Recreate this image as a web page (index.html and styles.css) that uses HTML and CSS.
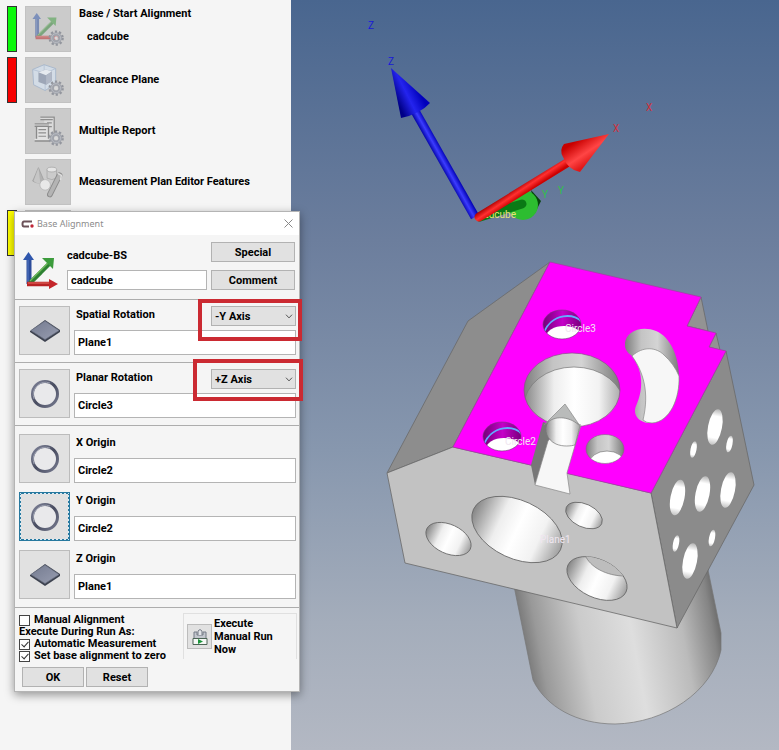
FILE: index.html
```html
<!DOCTYPE html>
<html lang="en">

<head>
    <meta charset="UTF-8">
    <meta name="viewport" content="width=device-width, initial-scale=1">
    <title>Base Alignment</title>
    <link rel="stylesheet" href="styles.css">
</head>

<body>
    <!-- shared icons -->
    <svg class="defs" aria-hidden="true">
        <defs>
            <linearGradient id="tile" x1="0" y1="0" x2="1" y2="1">
                <stop offset="0" stop-color="#747b90" />
                <stop offset="1" stop-color="#989db0" />
            </linearGradient>
            <linearGradient id="ringFill" x1="0" y1="0" x2="1" y2="1">
                <stop offset="0" stop-color="#80849a" />
                <stop offset=".5" stop-color="#484c60" />
                <stop offset="1" stop-color="#777b90" />
            </linearGradient>
        </defs>
        <symbol id="gear" viewBox="0 0 18 18">
            <circle cx="9" cy="9" r="7" fill="none" stroke="#92959d" stroke-width="3" stroke-dasharray="2.4 2" />
            <circle cx="9" cy="9" r="4.500" fill="none" stroke="#a0a3ab" stroke-width="4" />
            <circle cx="9" cy="9" r="5" fill="none" stroke="#b9bcc3" stroke-width="1" />
            <circle cx="9" cy="9" r="2" fill="#d8d8d8" />
        </symbol>
        <symbol id="axes" viewBox="0 0 36 38">
            <path d="M7 32V8" stroke="#2c4c9a" stroke-width="5" />
            <path d="M6 30V8" stroke="#5578c4" stroke-width="1" />
            <path d="M1 8L6.500 0L12 8Z" fill="#2f56ac" />
            <path d="M8 31L27 12" stroke="#2d8132" stroke-width="4.500" />
            <path d="M8 29L26 11" stroke="#70bb5c" stroke-width="1.200" />
            <path d="M20 6L32 6L31 17Z" fill="#3c9c3c" />
            <path d="M5 32H28" stroke="#b82224" stroke-width="4.500" />
            <path d="M6 31H28" stroke="#e66a60" stroke-width="1" />
            <path d="M27 27L36 32L27 37Z" fill="#c4262a" />
        </symbol>
        <symbol id="plane" viewBox="0 0 30 22">
            <path d="M0 11L15 0L30 10V12L15 22L0 12Z" fill="#3d424f" />
            <path d="M1 10.500L15 1L29 10.500L15 19.500Z" fill="url(#tile)" stroke="#6c7284" stroke-width=".7" />
        </symbol>
        <symbol id="ring" viewBox="0 0 28 28">
            <circle cx="14" cy="14" r="12.500" fill="#e9e9eb" stroke="url(#ringFill)" stroke-width="3" />
            <path d="M3 19A12.500 12.500 0 0 1 19 3" fill="none" stroke="#9a9eae" stroke-width="1" />
        </symbol>
        <symbol id="chevron" viewBox="0 0 8 5">
            <path d="M1 .7L4 3.900L7 .7" fill="none" stroke="#555" stroke-width="1" />
        </symbol>
    </svg>

    <main class="app">
        <nav class="steps">
            <div class="step">
                <span class="status green"></span>
                <button class="tool" aria-label="Base / Start Alignment">
                    <svg viewBox="0 0 46 46">
                        <g opacity=".5">
                            <use href="#axes" x="6" y="6" width="29" height="31" />
                        </g>
                        <use href="#gear" x="23" y="24" width="17" height="17" />
                    </svg>
                </button>
                <div class="caption top">
                    <p>Base / Start Alignment</p>
                    <p class="sub">cadcube</p>
                </div>
            </div>
            <div class="step">
                <span class="status red"></span>
                <button class="tool" aria-label="Clearance Plane">
                    <svg viewBox="0 0 46 46">
                        <path d="M7 12L19 7L31 11V27L20 34L8 28Z" fill="#d3dce6" stroke="#9fb1c9" stroke-width=".8" />
                        <path d="M7 12L20 16L31 11M20 16V34M19 7V14" fill="none" stroke="#a9b9ce" stroke-width=".7" />
                        <path d="M13 15L21 12L27 14V24L21 28L13 25Z" fill="#9da6b7" />
                        <path d="M13 15L21 12L27 14L21 18Z" fill="#e6eaef" />
                        <path d="M21 18L27 14V24L21 28Z" fill="#b1b8c6" />
                        <use href="#gear" x="23" y="23" width="17" height="17" />
                    </svg>
                </button>
                <div class="caption">
                    <p>Clearance Plane</p>
                </div>
            </div>
            <div class="step">
                <span class="status"></span>
                <button class="tool" aria-label="Multiple Report">
                    <svg viewBox="0 0 46 46">
                        <path d="M15 8H30V26H19V11H15Z" fill="#dadada" />
                        <path d="M15 8.500H30M29.500 8V26M15 11H28" fill="none" stroke="#8d8d8d" stroke-width="1.300" />
                        <path d="M22 14.500H27M24 18.500H27" stroke="#8d8d8d" stroke-width="1.200" />
                        <path d="M9 15H24V31H25V34H9V31H11V18H9Z" fill="#e2e2e2" />
                        <path d="M9 15.500H24M9 18H24M11 18V31M23.500 18V31M9 33.500H25" fill="none" stroke="#8a8a8a" stroke-width="1.400" />
                        <path d="M13 21.500H21M13 25H21M13 28.500H21" stroke="#8d8d8d" stroke-width="1.200" />
                        <use href="#gear" x="23" y="22" width="17" height="17" />
                    </svg>
                </button>
                <div class="caption">
                    <p>Multiple Report</p>
                </div>
            </div>
            <div class="step">
                <span class="status"></span>
                <button class="tool" aria-label="Measurement Plan Editor Features">
                    <svg viewBox="0 0 46 46">
                        <path d="M13 8L19 22Q13 26 7 22Z" fill="#b2b2b2" stroke="#999" stroke-width=".7" />
                        <path d="M13 8L15 24Q10 25 8 22Z" fill="#c6c6c6" />
                        <path d="M22 10V19Q27 22 32 19V10" fill="#cbcbcb" stroke="#a0a0a0" stroke-width=".7" />
                        <ellipse cx="27" cy="10" rx="5" ry="2.500" fill="#e5e5e5" stroke="#a0a0a0" stroke-width=".7" />
                        <path d="M35 16L25 36" stroke="#8b8b8b" stroke-width="6" stroke-linecap="round" />
                        <path d="M35 16L25 36" stroke="#b4b4b4" stroke-width="4" stroke-linecap="round" />
                        <path d="M33 14L37 16L36 21" fill="none" stroke="#dedede" stroke-width="1.500" />
                        <circle cx="20" cy="26" r="5.500" fill="#e8e8e8" stroke="#b0b0b0" stroke-width=".7" />
                    </svg>
                </button>
                <div class="caption">
                    <p>Measurement Plan Editor Features</p>
                </div>
            </div>
            <div class="step">
                <span class="status yellow"></span>
                <span class="tool"></span>
            </div>
        </nav>

        <section class="viewer">
            <svg viewBox="291 0 488 750" role="img" aria-label="cadcube model">
                <defs>
                    <linearGradient id="bore">
                        <stop offset="0" stop-color="#858585" />
                        <stop offset=".3" stop-color="#eee" />
                        <stop offset=".5" stop-color="#fff" />
                        <stop offset=".75" stop-color="#f2f2f2" />
                        <stop offset="1" stop-color="#a0a0a0" />
                    </linearGradient>
                    <linearGradient id="wall">
                        <stop offset="0" stop-color="#7d7d7d" />
                        <stop offset=".3" stop-color="#c4c4c4" />
                        <stop offset=".6" stop-color="#d4d4d4" />
                        <stop offset="1" stop-color="#7a7a7a" />
                    </linearGradient>
                    <linearGradient id="side" x2="0" y2="1">
                        <stop offset="0" stop-color="#b5b5b5" />
                        <stop offset=".2" stop-color="#fff" />
                        <stop offset=".8" stop-color="#fff" />
                        <stop offset="1" stop-color="#c2c2c2" />
                    </linearGradient>
                    <linearGradient id="post" gradientUnits="userSpaceOnUse" x1="522" y1="640" x2="718" y2="604">
                        <stop offset="0" stop-color="#777" />
                        <stop offset=".08" stop-color="#999" />
                        <stop offset=".3" stop-color="#cbcbcb" />
                        <stop offset=".55" stop-color="#dedede" />
                        <stop offset=".8" stop-color="#bbb" />
                        <stop offset=".95" stop-color="#858585" />
                        <stop offset="1" stop-color="#666" />
                    </linearGradient>
                    <linearGradient id="violet">
                        <stop offset="0" stop-color="#730078" />
                        <stop offset=".5" stop-color="#c500c8" />
                        <stop offset="1" stop-color="#760079" />
                    </linearGradient>
                    <linearGradient id="blueShaft" gradientUnits="userSpaceOnUse" x1="440" y1="166" x2="449" y2="161">
                        <stop offset="0" stop-color="#0000a0" />
                        <stop offset=".5" stop-color="#3c3cff" />
                        <stop offset="1" stop-color="#0000b0" />
                    </linearGradient>
                    <linearGradient id="blueCone" gradientUnits="userSpaceOnUse" x1="398" y1="104" x2="420" y2="93">
                        <stop offset="0" stop-color="#000086" />
                        <stop offset=".5" stop-color="#2424ee" />
                        <stop offset="1" stop-color="#0000bb" />
                    </linearGradient>
                    <linearGradient id="redShaft" gradientUnits="userSpaceOnUse" x1="519" y1="185" x2="525" y2="194">
                        <stop offset="0" stop-color="#a00" />
                        <stop offset=".5" stop-color="#ff3030" />
                        <stop offset="1" stop-color="#c00" />
                    </linearGradient>
                    <linearGradient id="redCone" gradientUnits="userSpaceOnUse" x1="572" y1="144" x2="586" y2="165">
                        <stop offset="0" stop-color="#c80000" />
                        <stop offset=".6" stop-color="#ff4545" />
                        <stop offset="1" stop-color="#e01818" />
                    </linearGradient>
                    <clipPath id="cBig"><ellipse cx="572" cy="390" rx="48" ry="37" /></clipPath>
                    <clipPath id="c3"><ellipse cx="562" cy="324.500" rx="19" ry="14.500" /></clipPath>
                    <clipPath id="c2"><ellipse cx="502" cy="436.500" rx="19" ry="14.500" /></clipPath>
                    <clipPath id="c1"><ellipse cx="605" cy="449" rx="19" ry="14.500" /></clipPath>
                    <clipPath id="cFront"><ellipse cx="597" cy="578.500" rx="32" ry="19" transform="rotate(25 597 578.500)" /></clipPath>
                </defs>

                <!-- post under the cube -->
                <path d="M514 586L533 680C546 707 577 724 615 724C665 723 712 692 721 650V633L706 560Z" fill="url(#post)" stroke="#777" stroke-width=".7" />

                <!-- cube faces -->
                <g stroke="#6a6a6a" stroke-width=".8" stroke-linejoin="round">
                    <path d="M550 262L468 321L387 473L453 447Z" fill="#8d8d8d" />
                    <path d="M701 297L687 326L708 331Z" fill="#939393" />
                    <path d="M716 333L709 347L720 350Z" fill="#939393" />
                    <path d="M726 351L754 485L677 628L651 493Z" fill="#8b8b8b" />
                    <path d="M387 473L453 447L531 465L567 473L651 493L677 628L405 563Z" fill="#c2c2c2" />
                    <path d="M550 262L701 297L687 326L716 333L709 347L726 351L651 493L453 447Z" fill="#f0f" stroke="#a83aa8" />
                </g>

                <!-- center bore -->
                <ellipse cx="572" cy="390" rx="48" ry="37" fill="url(#wall)" />
                <g clip-path="url(#cBig)">
                    <ellipse cx="574" cy="406" rx="50" ry="39" fill="url(#bore)" stroke="#777" stroke-width=".7" />
                </g>
                <ellipse cx="572" cy="390" rx="48" ry="37" fill="none" stroke="#8d4a8d" stroke-width=".7" />

                <!-- notch -->
                <path d="M543 422L531 465L535 485L549 442L550 424Z" fill="#777" />
                <path d="M565 404L544 425Q550 418 580 426Z" fill="#b9bbba" stroke="#888" stroke-width=".7" />
                <path d="M548 441L535 485L570 494L567 473L581 425L565 420Z" fill="#f7f7f7" stroke="#888" stroke-width=".7" />
                <path d="M580 426C571 417 556 415 548 422C543 430 547 440 556 444C563 447 571 446 575 445Z" fill="url(#bore)" stroke="#777" stroke-width=".7" />

                <!-- curved slot -->
                <path d="M625 343C626 331 642 325 656 331C671 337 679 358 679 376C680 398 670 422 652 423C640 424 632 415 636 406C644 389 643 370 632 356Q624 351 625 343Z" fill="url(#wall)" />
                <path d="M632 356C643 346 656 347 664 355Q674 364 679 376C680 398 670 422 652 423Q646 423 643 420C648 399 647 377 632 356Z" fill="#f7f7f7" stroke="#888" stroke-width=".7" />

                <!-- round bores on the top face -->
                <ellipse cx="605" cy="449" rx="19" ry="14.500" fill="url(#wall)" />
                <g clip-path="url(#c1)"><ellipse cx="607" cy="464" rx="18" ry="13" fill="#fff" stroke="#777" stroke-width=".7" /></g>
                <ellipse cx="605" cy="449" rx="19" ry="14.500" fill="none" stroke="#8a5a8a" stroke-width=".6" />

                <g clip-path="url(#c3)">
                    <path d="M543 308H582V340H543Z" fill="url(#violet)" />
                    <ellipse cx="564" cy="337" rx="18" ry="11" fill="#fff" />
                    <path d="M543 335C550 312 577 312 583 324" fill="none" stroke="#62adff" stroke-width="2" />
                </g>
                <ellipse cx="562" cy="324.500" rx="19" ry="14.500" fill="none" stroke="#77387d" stroke-width=".6" />
                <g clip-path="url(#c2)">
                    <path d="M483 420H522V452H483Z" fill="url(#violet)" />
                    <ellipse cx="504" cy="449" rx="18" ry="11" fill="#fff" />
                    <path d="M483 447C490 424 517 424 523 436" fill="none" stroke="#62adff" stroke-width="2" />
                </g>
                <ellipse cx="502" cy="436.500" rx="19" ry="14.500" fill="none" stroke="#77387d" stroke-width=".6" />

                <!-- front face bores -->
                <g fill="url(#bore)" stroke="#666" stroke-width=".8">
                    <ellipse cx="448.500" cy="539" rx="24" ry="14.500" transform="rotate(25 448.500 539)" />
                    <ellipse cx="517" cy="529.500" rx="48" ry="29" transform="rotate(25 517 529.500)" />
                    <ellipse cx="584" cy="515.500" rx="19.500" ry="11.500" transform="rotate(25 584 515.500)" />
                    <ellipse cx="597" cy="578.500" rx="32" ry="19" transform="rotate(25 597 578.500)" />
                </g>
                <g clip-path="url(#cFront)"><path d="M585 555C590 567 606 576 625 576L618 550Z" fill="#bdbdbd" stroke="#777" stroke-width=".7" /></g>

                <!-- right face bores -->
                <g fill="url(#side)">
                    <ellipse cx="715" cy="427" rx="7" ry="18" transform="rotate(11 715 427)" />
                    <ellipse cx="693.500" cy="449.500" rx="3" ry="8.500" transform="rotate(11 693.500 449.500)" />
                    <ellipse cx="729.500" cy="444" rx="3" ry="8.500" transform="rotate(11 729.500 444)" />
                    <ellipse cx="677.500" cy="497.500" rx="7" ry="18" transform="rotate(11 677.500 497.500)" />
                    <ellipse cx="702.500" cy="494" rx="7" ry="18" transform="rotate(11 702.500 494)" />
                    <ellipse cx="728" cy="490" rx="7" ry="18" transform="rotate(11 728 490)" />
                    <ellipse cx="676" cy="543.500" rx="3" ry="8.500" transform="rotate(11 676 543.500)" />
                    <ellipse cx="712" cy="538" rx="3" ry="8.500" transform="rotate(11 712 538)" />
                    <ellipse cx="690" cy="561" rx="7" ry="18" transform="rotate(11 690 561)" />
                </g>

                <!-- coordinate system -->
                <path d="M531 190L541 201L535 213Z" fill="#06450c" />
                <circle cx="523" cy="205" r="15" fill="#2dbd30" />
                <path d="M480 217L522 204" stroke="#0a7a15" stroke-width="9" stroke-linecap="round" />
                <text class="mark yellow-text" x="478" y="218">cadcube</text>
                <path d="M475 217L415 111" stroke="url(#blueShaft)" stroke-width="9" />
                <path d="M391 68L401 118Q420 114 430 103Z" fill="url(#blueCone)" />
                <path d="M479 217L570 161" stroke="url(#redShaft)" stroke-width="9" stroke-linecap="round" />
                <path d="M609 134L564 144Q559 150 563 157Q568 170 580 172Z" fill="url(#redCone)" />

                <g class="mark">
                    <text class="blue-text" x="368" y="29">Z</text>
                    <text class="blue-text" x="388" y="65">Z</text>
                    <text class="red-text" x="646" y="111">X</text>
                    <text class="red-text" x="613" y="132">X</text>
                    <text class="green-text" x="542" y="198">Y</text>
                    <text class="green-text" x="558" y="194">Y</text>
                    <text x="565" y="332">Circle3</text>
                    <text x="505" y="445">Circle2</text>
                    <text x="540" y="543">Plane1</text>
                </g>
            </svg>
        </section>

        <form class="dialog" role="dialog" aria-labelledby="dialog-title">
            <header class="titlebar">
                <svg class="logo" viewBox="0 0 13 8">
                    <path d="M11 1.500H3Q1.500 1.500 1.500 4T3 6.500H8" fill="none" stroke="#6c5259" stroke-width="2" />
                    <circle cx="11" cy="6" r="1.700" fill="#c02638" />
                </svg>
                <h1 id="dialog-title">Base Alignment</h1>
                <button class="close" type="button" aria-label="Close">
                    <svg viewBox="0 0 9 9">
                        <path d="M.5 .5L8.500 8.500M8.500 .5L.5 8.500" stroke="#888" stroke-width="1" />
                    </svg>
                </button>
            </header>

            <div class="intro">
                <svg class="axes"><use href="#axes" /></svg>
                <label for="name">cadcube-BS</label>
                <button class="button" type="button">Special</button>
                <input class="field" id="name" type="text" value="cadcube">
                <button class="button" type="button">Comment</button>
            </div>

            <div class="row ruled">
                <button class="feature" type="button" aria-label="Spatial Rotation feature"><svg class="plane"><use href="#plane" /></svg></button>
                <label for="spatial">Spatial Rotation</label>
                <span class="axis">
                    <select aria-label="Spatial Rotation axis">
                        <option>-Y Axis</option>
                        <option>+Y Axis</option>
                    </select>
                    <svg class="chevron"><use href="#chevron" /></svg>
                </span>
                <input class="field" id="spatial" type="text" value="Plane1">
                <span class="highlight spatial"></span>
            </div>
            <div class="row ruled">
                <button class="feature" type="button" aria-label="Planar Rotation feature"><svg class="ring"><use href="#ring" /></svg></button>
                <label for="planar">Planar Rotation</label>
                <span class="axis">
                    <select aria-label="Planar Rotation axis">
                        <option>+Z Axis</option>
                        <option>-Z Axis</option>
                    </select>
                    <svg class="chevron"><use href="#chevron" /></svg>
                </span>
                <input class="field" id="planar" type="text" value="Circle3">
                <span class="highlight planar"></span>
            </div>

            <div class="origins ruled">
                <div class="row">
                    <button class="feature" type="button" aria-label="X Origin feature"><svg class="ring"><use href="#ring" /></svg></button>
                    <label for="x">X Origin</label>
                    <input class="field" id="x" type="text" value="Circle2">
                </div>
                <div class="row">
                    <button class="feature active" type="button" aria-label="Y Origin feature"><svg class="ring"><use href="#ring" /></svg></button>
                    <label for="y">Y Origin</label>
                    <input class="field" id="y" type="text" value="Circle2">
                </div>
                <div class="row">
                    <button class="feature" type="button" aria-label="Z Origin feature"><svg class="plane"><use href="#plane" /></svg></button>
                    <label for="z">Z Origin</label>
                    <input class="field" id="z" type="text" value="Plane1">
                </div>
            </div>

            <footer class="ruled">
                <div class="options">
                    <div class="checks">
                        <label><input type="checkbox">Manual Alignment</label>
                        <p>Execute During Run As:</p>
                        <label><input type="checkbox" checked>Automatic Measurement</label>
                        <label><input type="checkbox" checked>Set base alignment to zero</label>
                    </div>
                    <div class="execute">
                        <button class="run" type="button" aria-labelledby="run-label">
                            <svg viewBox="0 0 16 18">
                                <path d="M2 4H5V7H11V4H14V11H2Z" fill="#c3c7ce" stroke="#747a86" />
                                <path d="M6 7V3Q8 0 10 3V7" fill="#e3e5e9" stroke="#747a86" />
                                <path d="M1 10.500H15V16.500H1Z" fill="#f5f8f5" stroke="#4d6556" />
                                <path d="M6 11L11 13.500L6 16Z" fill="#1b943b" />
                            </svg>
                        </button>
                        <span id="run-label">Execute Manual Run Now</span>
                    </div>
                </div>
                <div class="actions">
                    <button class="button" type="submit">OK</button>
                    <button class="button" type="reset">Reset</button>
                </div>
            </footer>
        </form>
    </main>
</body></html>
```
FILE: styles.css
```css
* {
    box-sizing: border-box;
}

body {
    margin: 0;
    font-family: Roboto, "Liberation Sans", sans-serif;
    font-size: 11px;
    font-weight: 700;
    line-height: 13px;
    color: #000;
}

p,
h1 {
    margin: 0;
}

svg {
    display: block;
}

button,
input,
select {
    font: inherit;
    color: inherit;
    margin: 0;
    padding: 0;
    border-radius: 0;
}

.defs {
    position: absolute;
    width: 0;
    height: 0;
}

.app {
    position: relative;
    display: flex;
    min-height: 100vh;
}

/* step list */
.steps {
    flex: 0 0 291px;
    display: flex;
    flex-direction: column;
    gap: 5px;
    padding: 6px 7px;
    background: #f5f5f5;
}

.step {
    display: grid;
    grid-template-columns: 10px 46px 1fr;
    column-gap: 8px;
    min-height: 46px;
}

.status.green,
.status.red,
.status.yellow {
    border: 1px solid #333;
}

.status.green {
    background: #0bf80b;
}

.status.red {
    background: #f60000;
}

.status.yellow {
    background: #ff0;
}

.tool {
    border: 1px solid #c2c2c2;
    background: #cbcbcb;
}

.tool svg {
    width: 100%;
}

.caption {
    align-self: center;
    padding-bottom: 2px;
}

.caption.top {
    align-self: start;
    padding-top: 1px;
}

.sub {
    padding: 10px 8px 0;
}

/* 3d view */
.viewer {
    flex: 1;
    background: linear-gradient(#49668f, #6c7e9d 32%, #8797ae 60%, #a4adbb 83%, #b3b8c3);
}

.viewer svg {
    width: 100%;
    height: 100vh;
}

.mark {
    font-size: 10px;
    font-weight: 400;
    fill: #f0e6f0;
}

.blue-text {
    fill: #1818d8;
}

.red-text {
    fill: #d2303c;
}

.green-text {
    fill: #2fc04a;
}

.yellow-text {
    fill: #e6e678;
}

/* dialog window */
.dialog {
    position: absolute;
    left: 14px;
    top: 211px;
    width: 286px;
    background: #f5f5f5;
    border: 1px solid #b4b4b4;
    box-shadow: 0 3px 9px rgba(0, 0, 0, .4);
}

.titlebar {
    display: flex;
    align-items: center;
    gap: 3px;
    height: 23px;
    padding: 0 6px;
    background: #fff;
}

.logo {
    width: 13px;
    height: 8px;
}

.titlebar h1 {
    flex: 1;
    font-family: "Noto Sans", "Open Sans", sans-serif;
    font-size: 9px;
    font-weight: 400;
    color: #8c8c8c;
}

.close {
    border: 0;
    background: none;
}

.close svg {
    width: 9px;
    height: 9px;
}

.button {
    height: 20px;
    border: 1px solid #b2b2b2;
    background: #e1e1e1;
}

.field {
    min-width: 0;
    width: 100%;
    border: 1px solid #b4b4b4;
    padding: 0 3px;
    background: #fff;
}

.intro {
    display: grid;
    grid-template-columns: 36px 1fr 84px;
    grid-template-rows: 20px 20px;
    gap: 8px 4px;
    align-items: center;
    padding: 7px 4px 9px 7px;
}

.intro .axes {
    grid-row: 1 / 3;
    width: 36px;
    height: 38px;
    align-self: end;
}

.intro label,
.intro .field {
    margin-left: 5px;
}

.intro label {
    align-self: end;
}

.intro .field {
    width: auto;
    height: 20px;
}

.ruled {
    border-top: 1px solid #adadad;
}

.row {
    position: relative;
    display: grid;
    grid-template-columns: 51px 1fr 85px;
    grid-template-rows: 20px 25px;
    gap: 4px;
    padding: 6px 3px 7px 4px;
}

.feature {
    grid-row: 1 / 3;
    display: grid;
    place-items: center;
    border: 1px solid #bcbcbc;
    background: #e1e1e1;
}

.feature.active {
    border: 2px dotted #d8eaf5;
    outline: 1px solid #27799f;
    outline-offset: -1px;
    background: linear-gradient(#e1e1e1, #e1e1e1) padding-box, #27799f;
}

.plane {
    width: 30px;
    height: 22px;
}

.ring {
    width: 28px;
    height: 28px;
}

.row label {
    padding: 2px;
}

.row .field {
    grid-column: 2 / 4;
}

.axis {
    display: grid;
    align-items: center;
}

.axis select {
    grid-area: 1 / 1;
    height: 20px;
    appearance: none;
    border: 1px solid #b2b2b2;
    padding: 0 3px;
    background: #e1e1e1;
}

.chevron {
    grid-area: 1 / 1;
    justify-self: end;
    width: 8px;
    height: 5px;
    margin-right: 3px;
    pointer-events: none;
}

/* red frames round the axis choices */
.highlight {
    position: absolute;
    z-index: 1;
    border: 4px solid #cb2a32;
    pointer-events: none;
}

.highlight.spatial {
    inset: -1px -3px 21px 183px;
}

.highlight.planar {
    inset: -4px -4px 24px 178px;
}

.origins {
    display: grid;
    gap: 9px;
    padding: 8px 0;
}

.origins .row {
    padding-top: 0;
    padding-bottom: 0;
}

.options {
    display: flex;
    justify-content: space-between;
    padding: 5px 2px 0 4px;
}

.checks {
    padding-top: 1px;
    line-height: 12px;
}

.checks label {
    display: flex;
    align-items: center;
    gap: 4px;
}

.checks input {
    position: relative;
    width: 11px;
    height: 11px;
    appearance: none;
    border: 1px solid #444;
    background: #fff;
}

.checks input:checked::after {
    content: "";
    position: absolute;
    left: 3px;
    top: 0;
    width: 3px;
    height: 6px;
    border: solid #333;
    border-width: 0 1px 1px 0;
    transform: rotate(42deg);
}

.execute {
    display: flex;
    align-items: center;
    gap: 2px;
    width: 114px;
    height: 46px;
    padding: 0 3px;
    border: 1px solid #e0e0e0;
    border-bottom: 0;
}

.execute span {
    flex: 1;
    padding-right: 16px;
}

.run {
    display: grid;
    place-items: center;
    width: 25px;
    height: 25px;
    border: 1px solid #bcbcbc;
    background: #e1e1e1;
}

.run svg {
    width: 16px;
    height: 18px;
}

.actions {
    display: flex;
    gap: 2px;
    padding: 5px 7px 4px;
}

.actions .button {
    width: 62px;
}
```
